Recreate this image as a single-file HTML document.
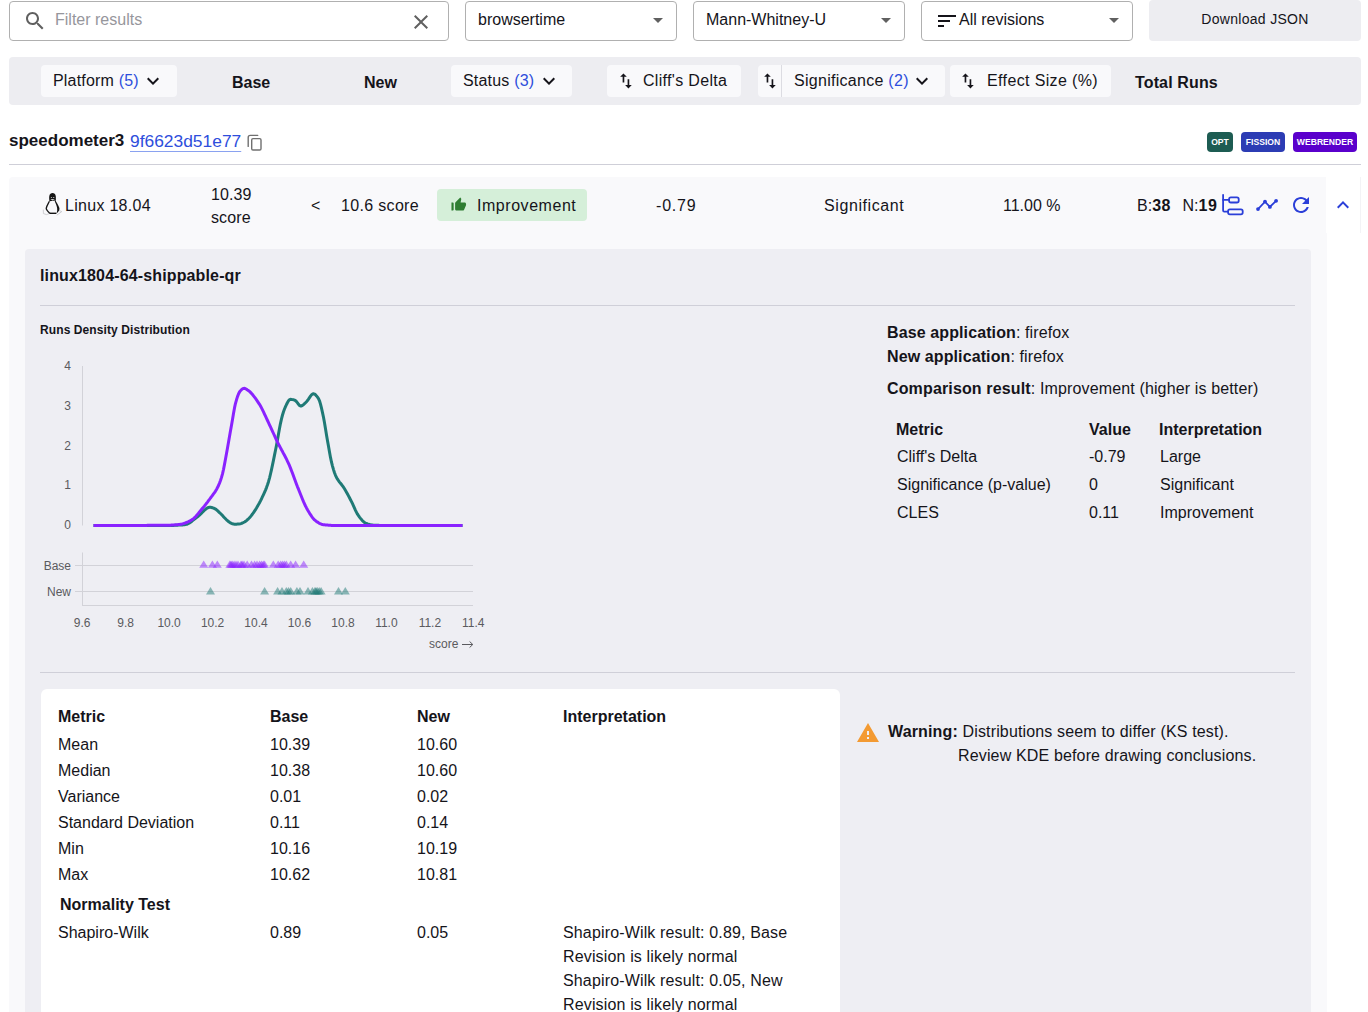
<!DOCTYPE html>
<html><head><meta charset="utf-8">
<style>
*{box-sizing:border-box;margin:0;padding:0}
html,body{width:1368px;height:1012px;overflow:hidden;background:#fff}
body{font-family:"Liberation Sans",sans-serif;color:#15141a;position:relative;font-size:16px}
.a{position:absolute;white-space:nowrap}
.box{position:absolute;border:1px solid #b0b0b0;border-radius:4px;background:#fff}
.btn{position:absolute;background:#f9f9fb;border-radius:4px}
.b{font-weight:bold}
.blue{color:#2e4edc}
.t16{font-size:16px;line-height:20px}
.badge{height:20px;border-radius:4px;color:#fff;font-size:8.6px;font-weight:bold;line-height:21px;text-align:center;letter-spacing:0}
</style></head><body>

<!-- top bar -->
<div class="box" style="left:9px;top:1px;width:440px;height:40px"></div>
<div class="a t16" id="filt" style="left:55px;top:10px;color:#96969c">Filter results</div>
<div class="box" style="left:465px;top:1px;width:212px;height:40px"></div>
<div class="a t16" id="bt" style="left:478px;top:10px">browsertime</div>
<div class="box" style="left:693px;top:1px;width:212px;height:40px"></div>
<div class="a t16" id="mw" style="left:706px;top:10px">Mann-Whitney-U</div>
<div class="box" style="left:921px;top:1px;width:212px;height:40px"></div>
<div class="a t16" id="ar" style="left:959px;top:10px">All revisions</div>
<div class="btn" style="left:1149px;top:0px;width:212px;height:41px;background:#ededf1"></div>
<div class="a" id="dj" style="left:1149px;top:9px;width:212px;text-align:center;font-size:14px;line-height:20px;letter-spacing:0.3px">Download JSON</div>

<!-- toolbar -->
<div class="a" style="left:9px;top:57px;width:1352px;height:48px;background:#ededf1;border-radius:4px"></div>
<div class="btn" style="left:41px;top:65px;width:136px;height:32px"></div>
<div class="a t16" id="plat" style="left:53px;top:71px;letter-spacing:0.18px">Platform <span class="blue">(5)</span></div>
<div class="a t16 b" id="base" style="left:232px;top:73px">Base</div>
<div class="a t16 b" id="new" style="left:364px;top:73px">New</div>
<div class="btn" style="left:451px;top:65px;width:121px;height:32px"></div>
<div class="a t16" id="stat" style="left:463px;top:71px;letter-spacing:0.2px">Status <span class="blue">(3)</span></div>
<div class="btn" style="left:607px;top:65px;width:134px;height:32px"></div>
<div class="a t16" id="cd" style="left:643px;top:71px;letter-spacing:0.32px">Cliff's Delta</div>
<div class="btn" style="left:758px;top:65px;width:187px;height:32px"></div>
<div class="a t16" id="sig" style="left:794px;top:71px;letter-spacing:0.28px">Significance <span class="blue">(2)</span></div>
<div class="btn" style="left:950px;top:65px;width:161px;height:32px"></div>
<div class="a t16" id="es" style="left:987px;top:71px;letter-spacing:0.37px">Effect Size (%)</div>
<div class="a t16 b" id="tr" style="left:1135px;top:73px;letter-spacing:0.14px">Total Runs</div>

<!-- header -->
<div class="a b" id="sp" style="left:9px;top:131px;font-size:17px;line-height:20px">speedometer3</div>
<div class="a blue" id="hash" style="left:130px;top:131px;font-size:17.4px;line-height:20px;text-decoration:underline;text-decoration-color:#8aa2f0;text-underline-offset:4px;text-decoration-thickness:1px">9f6623d51e77</div>
<div class="a" style="left:9px;top:164px;width:1352px;height:1px;background:#cfcfd8"></div>

<!-- row -->
<div class="a" style="left:9px;top:177px;width:1317px;height:840px;background:#f9f9fb;border-radius:4px 0 0 0"></div>
<div class="a" style="left:1326px;top:233px;width:1px;height:800px;background:#f9f9fb"></div>
<div class="a t16" id="lin" style="left:65px;top:196px;letter-spacing:0.29px">Linux 18.04</div>
<div class="a t16" id="v1" style="left:211px;top:182.5px;line-height:23.5px;letter-spacing:0.1px">10.39<br>score</div>
<div class="a t16" id="lt" style="left:311px;top:196px">&lt;</div>
<div class="a t16" id="v2" style="left:341px;top:196px;letter-spacing:0.33px">10.6 score</div>
<div class="a" style="left:437px;top:189px;width:150px;height:32px;background:#d5efd9;border-radius:4px"></div>
<div class="a t16" id="imp" style="left:477px;top:196px;letter-spacing:0.54px">Improvement</div>
<div class="a t16" id="cdv" style="left:656px;top:196px;letter-spacing:0.8px">-0.79</div>
<div class="a t16" id="sgv" style="left:824px;top:196px;letter-spacing:0.59px">Significant</div>
<div class="a t16" id="esv" style="left:1003px;top:196px">11.00 %</div>
<div class="a t16" id="runs" style="left:1137px;top:196px">B:<b style="letter-spacing:0.5px">38</b></div><div class="a t16" id="runs2" style="left:1182.5px;top:196px">N:<b style="letter-spacing:0.5px">19</b></div>

<!-- details panel -->
<div class="a" style="left:25px;top:249px;width:1286px;height:800px;background:#eeeef3;border-radius:4px"></div>
<div class="a b" id="task" style="left:40px;top:266px;font-size:16px;line-height:20px;letter-spacing:0.14px">linux1804-64-shippable-qr</div>
<div class="a" style="left:40px;top:305px;width:1255px;height:1px;background:#cfcfd8"></div>
<div class="a b" id="rdd" style="left:40px;top:323px;font-size:12px;line-height:14px;letter-spacing:0.1px">Runs Density Distribution</div>

<div class="a t16" id="ba" style="left:887px;top:323px;letter-spacing:0.11px"><b>Base application</b>: firefox</div>
<div class="a t16" id="na" style="left:887px;top:347px;letter-spacing:0.11px"><b>New application</b>: firefox</div>
<div class="a t16" id="cr" style="left:887px;top:379px;letter-spacing:0.14px"><b>Comparison result</b>: Improvement (higher is better)</div>

<div class="a" style="left:40px;top:672px;width:1255px;height:1px;background:#cfcfd8"></div>
<div class="a" style="left:41px;top:689px;width:799px;height:400px;background:#fff;border-radius:6px"></div>


<!-- right info table -->
<div class="a t16 b" id="rm" style="left:896px;top:420px">Metric</div>
<div class="a t16 b" id="rv" style="left:1089px;top:420px">Value</div>
<div class="a t16 b" id="ri" style="left:1159px;top:420px">Interpretation</div>
<div class="a t16" style="left:897px;top:447px">Cliff's Delta</div>
<div class="a t16" style="left:1089px;top:447px">-0.79</div>
<div class="a t16" style="left:1160px;top:447px">Large</div>
<div class="a t16" style="left:897px;top:475px">Significance (p-value)</div>
<div class="a t16" style="left:1089px;top:475px">0</div>
<div class="a t16" style="left:1160px;top:475px">Significant</div>
<div class="a t16" id="cles" style="left:897px;top:503px">CLES</div>
<div class="a t16" style="left:1089px;top:503px">0.11</div>
<div class="a t16" style="left:1160px;top:503px">Improvement</div>

<!-- lower table -->
<div class="a t16 b" id="lm" style="left:58px;top:707px">Metric</div>
<div class="a t16 b" style="left:270px;top:707px">Base</div>
<div class="a t16 b" style="left:417px;top:707px">New</div>
<div class="a t16 b" style="left:563px;top:707px">Interpretation</div>
<div class="a t16" id="mean" style="left:58px;top:735px">Mean</div>
<div class="a t16" style="left:270px;top:735px">10.39</div>
<div class="a t16" style="left:417px;top:735px">10.60</div>
<div class="a t16" style="left:58px;top:761px">Median</div>
<div class="a t16" style="left:270px;top:761px">10.38</div>
<div class="a t16" style="left:417px;top:761px">10.60</div>
<div class="a t16" style="left:58px;top:787px">Variance</div>
<div class="a t16" style="left:270px;top:787px">0.01</div>
<div class="a t16" style="left:417px;top:787px">0.02</div>
<div class="a t16" id="std" style="left:58px;top:813px">Standard Deviation</div>
<div class="a t16" style="left:270px;top:813px">0.11</div>
<div class="a t16" style="left:417px;top:813px">0.14</div>
<div class="a t16" style="left:58px;top:839px">Min</div>
<div class="a t16" style="left:270px;top:839px">10.16</div>
<div class="a t16" style="left:417px;top:839px">10.19</div>
<div class="a t16" style="left:58px;top:865px">Max</div>
<div class="a t16" style="left:270px;top:865px">10.62</div>
<div class="a t16" style="left:417px;top:865px">10.81</div>
<div class="a t16 b" id="nt" style="left:60px;top:895px">Normality Test</div>
<div class="a t16" id="sw" style="left:58px;top:923px">Shapiro-Wilk</div>
<div class="a t16" style="left:270px;top:923px">0.89</div>
<div class="a t16" style="left:417px;top:923px">0.05</div>
<div class="a t16" id="swr" style="left:563px;top:921px;line-height:24px;letter-spacing:0.15px">Shapiro-Wilk result: 0.89, Base<br>Revision is likely normal<br>Shapiro-Wilk result: 0.05, New<br>Revision is likely normal</div>

<!-- warning -->
<div class="a t16" id="warn" style="left:888px;top:720px;line-height:24px;letter-spacing:0.15px"><b>Warning:</b> Distributions seem to differ (KS test).<br><span style="padding-left:70px">Review KDE before drawing conclusions.</span></div>

<!-- badges -->
<div class="a badge" style="left:1207px;top:132px;width:26px;background:#1d5c52">OPT</div>
<div class="a badge" style="left:1241px;top:132px;width:44px;background:#2c3cb4">FISSION</div>
<div class="a badge" style="left:1293px;top:132px;width:64px;background:#5a00cc">WEBRENDER</div>

<!-- chevron cell -->
<div class="a" style="left:1360px;top:177px;width:1px;height:56px;background:#f3f3f6"></div>

<svg class="a" style="left:0;top:0" width="1368" height="1012" viewBox="0 0 1368 1012">
<line x1="82.5" y1="366" x2="82.5" y2="525.5" stroke="#d2d2d8" stroke-width="1"/>
<text x="71" y="528.9" text-anchor="end" font-size="12" fill="#5a5a5e">0</text>
<text x="71" y="489.3" text-anchor="end" font-size="12" fill="#5a5a5e">1</text>
<text x="71" y="449.6" text-anchor="end" font-size="12" fill="#5a5a5e">2</text>
<text x="71" y="410.0" text-anchor="end" font-size="12" fill="#5a5a5e">3</text>
<text x="71" y="370.3" text-anchor="end" font-size="12" fill="#5a5a5e">4</text>
<g transform="translate(0,0.8)"><path d="M93.5 524.6 94.5 524.6 95.5 524.6 96.5 524.6 97.5 524.6 98.5 524.6 99.5 524.6 100.5 524.6 101.5 524.6 102.5 524.6 103.5 524.6 104.5 524.6 105.5 524.6 106.5 524.6 107.5 524.6 108.5 524.6 109.5 524.6 110.5 524.6 111.5 524.6 112.5 524.6 113.5 524.6 114.5 524.6 115.5 524.6 116.5 524.6 117.5 524.6 118.5 524.6 119.5 524.6 120.5 524.6 121.5 524.6 122.5 524.6 123.5 524.6 124.5 524.6 125.5 524.6 126.5 524.6 127.5 524.6 128.5 524.6 129.5 524.6 130.5 524.6 131.5 524.6 132.5 524.6 133.5 524.6 134.5 524.6 135.5 524.6 136.5 524.6 137.5 524.6 138.5 524.6 139.5 524.6 140.5 524.6 141.5 524.6 142.5 524.6 143.5 524.6 144.5 524.6 145.5 524.6 146.5 524.6 147.5 524.6 148.5 524.6 149.5 524.6 150.5 524.6 151.5 524.6 152.5 524.6 153.5 524.6 154.5 524.6 155.5 524.6 156.5 524.6 157.5 524.6 158.5 524.6 159.5 524.6 160.5 524.6 161.5 524.6 162.5 524.6 163.5 524.6 164.5 524.6 165.5 524.6 166.5 524.6 167.5 524.6 168.5 524.6 169.5 524.6 170.5 524.6 171.5 524.6 172.5 524.6 173.5 524.6 174.5 524.5 175.5 524.5 176.5 524.4 177.5 524.4 178.5 524.3 179.5 524.3 180.5 524.2 181.5 524.1 182.5 524.1 183.5 524.0 184.5 523.9 185.5 523.8 186.5 523.6 187.5 523.2 188.5 522.7 189.5 522.1 190.5 521.5 191.5 520.7 192.5 519.9 193.5 519.1 194.5 518.3 195.5 517.5 196.5 516.7 197.5 516.0 198.5 515.2 199.5 514.3 200.5 513.4 201.5 512.4 202.5 511.3 203.5 510.3 204.5 509.4 205.5 508.5 206.5 507.7 207.5 507.1 208.5 506.7 209.5 506.5 210.5 506.5 211.5 506.7 212.5 507.0 213.5 507.3 214.5 507.7 215.5 508.3 216.5 509.0 217.5 509.9 218.5 510.8 219.5 511.8 220.5 512.7 221.5 513.7 222.5 514.8 223.5 515.9 224.5 517.0 225.5 518.0 226.5 519.0 227.5 519.9 228.5 520.8 229.5 521.5 230.5 522.1 231.5 522.6 232.5 523.0 233.5 523.3 234.5 523.4 235.5 523.4 236.5 523.4 237.5 523.3 238.5 523.2 239.5 523.1 240.5 522.9 241.5 522.6 242.5 522.2 243.5 521.7 244.5 521.2 245.5 520.6 246.5 519.8 247.5 518.9 248.5 518.0 249.5 517.0 250.5 515.8 251.5 514.5 252.5 513.2 253.5 511.8 254.5 510.3 255.5 508.8 256.5 507.2 257.5 505.5 258.5 503.8 259.5 502.0 260.5 500.1 261.5 498.0 262.5 495.9 263.5 493.8 264.5 491.6 265.5 489.3 266.5 486.8 267.5 484.0 268.5 480.9 269.5 477.3 270.5 473.2 271.5 468.8 272.5 464.1 273.5 459.3 274.5 454.3 275.5 449.5 276.5 444.5 277.5 439.0 278.5 433.3 279.5 427.7 280.5 422.5 281.5 418.0 282.5 414.2 283.5 410.9 284.5 408.2 285.5 405.9 286.5 403.7 287.5 401.7 288.5 400.0 289.5 398.9 290.5 398.5 291.5 398.6 292.5 398.8 293.5 399.0 294.5 399.3 295.5 399.8 296.5 400.8 297.5 402.1 298.5 403.5 299.5 404.6 300.5 405.2 301.5 405.1 302.5 404.6 303.5 403.8 304.5 402.9 305.5 401.9 306.5 400.9 307.5 399.8 308.5 398.4 309.5 396.9 310.5 395.4 311.5 394.1 312.5 393.2 313.5 393.0 314.5 393.3 315.5 394.0 316.5 395.1 317.5 396.4 318.5 397.8 319.5 400.0 320.5 403.3 321.5 407.4 322.5 411.9 323.5 416.5 324.5 421.9 325.5 428.0 326.5 434.1 327.5 439.9 328.5 445.5 329.5 451.2 330.5 456.6 331.5 461.4 332.5 465.3 333.5 468.8 334.5 471.9 335.5 474.5 336.5 476.7 337.5 478.4 338.5 479.9 339.5 481.3 340.5 482.5 341.5 483.7 342.5 485.0 343.5 486.4 344.5 488.0 345.5 489.7 346.5 491.4 347.5 493.2 348.5 495.1 349.5 497.0 350.5 498.9 351.5 500.8 352.5 502.9 353.5 505.1 354.5 507.3 355.5 509.5 356.5 511.5 357.5 513.4 358.5 514.9 359.5 516.3 360.5 517.6 361.5 518.8 362.5 519.9 363.5 520.9 364.5 521.7 365.5 522.3 366.5 522.7 367.5 523.1 368.5 523.4 369.5 523.7 370.5 523.9 371.5 524.2 372.5 524.3 373.5 524.4 374.5 524.5 375.5 524.5 376.5 524.5 377.5 524.5 378.5 524.5 379.5 524.6 380.5 524.6 381.5 524.6 382.5 524.6 383.5 524.6 384.5 524.6 385.5 524.6 386.5 524.6 387.5 524.6 388.5 524.6 389.5 524.6 390.5 524.6 391.5 524.6 392.5 524.6 393.5 524.6 394.5 524.6 395.5 524.6 396.5 524.6 397.5 524.6 398.5 524.6 399.5 524.6 400.5 524.6 401.5 524.6 402.5 524.6 403.5 524.6 404.5 524.6 405.5 524.6 406.5 524.6 407.5 524.6 408.5 524.6 409.5 524.6 410.5 524.6 411.5 524.6 412.5 524.6 413.5 524.6 414.5 524.6 415.5 524.6 416.5 524.6 417.5 524.6 418.5 524.6 419.5 524.6 420.5 524.6 421.5 524.6 422.5 524.6 423.5 524.6 424.5 524.6 425.5 524.6 426.5 524.6 427.5 524.6 428.5 524.6 429.5 524.6 430.5 524.6 431.5 524.6 432.5 524.6 433.5 524.6 434.5 524.6 435.5 524.6 436.5 524.6 437.5 524.6 438.5 524.6 439.5 524.6 440.5 524.6 441.5 524.6 442.5 524.6 443.5 524.6 444.5 524.6 445.5 524.6 446.5 524.6 447.5 524.6 448.5 524.6 449.5 524.6 450.5 524.6 451.5 524.6 452.5 524.6 453.5 524.6 454.5 524.6 455.5 524.6 456.5 524.6 457.5 524.6 458.5 524.6 459.5 524.6 460.5 524.6 461.5 524.6 462.5 524.6" fill="none" stroke="#1f7a76" stroke-width="3" stroke-linejoin="round"/>
<path d="M93.5 524.6 94.5 524.6 95.5 524.6 96.5 524.6 97.5 524.6 98.5 524.6 99.5 524.6 100.5 524.6 101.5 524.6 102.5 524.6 103.5 524.6 104.5 524.6 105.5 524.6 106.5 524.6 107.5 524.6 108.5 524.6 109.5 524.6 110.5 524.6 111.5 524.6 112.5 524.6 113.5 524.6 114.5 524.6 115.5 524.6 116.5 524.6 117.5 524.6 118.5 524.6 119.5 524.6 120.5 524.6 121.5 524.6 122.5 524.6 123.5 524.6 124.5 524.6 125.5 524.6 126.5 524.6 127.5 524.6 128.5 524.6 129.5 524.6 130.5 524.6 131.5 524.6 132.5 524.6 133.5 524.6 134.5 524.6 135.5 524.6 136.5 524.6 137.5 524.6 138.5 524.6 139.5 524.6 140.5 524.6 141.5 524.6 142.5 524.6 143.5 524.6 144.5 524.6 145.5 524.6 146.5 524.6 147.5 524.5 148.5 524.5 149.5 524.5 150.5 524.5 151.5 524.5 152.5 524.5 153.5 524.5 154.5 524.5 155.5 524.5 156.5 524.5 157.5 524.5 158.5 524.5 159.5 524.5 160.5 524.5 161.5 524.5 162.5 524.5 163.5 524.5 164.5 524.5 165.5 524.5 166.5 524.5 167.5 524.5 168.5 524.4 169.5 524.4 170.5 524.4 171.5 524.3 172.5 524.2 173.5 524.2 174.5 524.1 175.5 524.0 176.5 523.9 177.5 523.9 178.5 523.8 179.5 523.7 180.5 523.5 181.5 523.4 182.5 523.1 183.5 522.8 184.5 522.5 185.5 522.1 186.5 521.7 187.5 521.3 188.5 520.9 189.5 520.4 190.5 519.8 191.5 519.2 192.5 518.6 193.5 517.8 194.5 516.9 195.5 515.9 196.5 514.8 197.5 513.6 198.5 512.4 199.5 511.1 200.5 509.9 201.5 508.7 202.5 507.5 203.5 506.3 204.5 505.1 205.5 503.8 206.5 502.5 207.5 501.3 208.5 499.9 209.5 498.6 210.5 497.2 211.5 495.9 212.5 494.5 213.5 493.1 214.5 491.8 215.5 490.3 216.5 488.6 217.5 486.8 218.5 484.7 219.5 482.3 220.5 479.7 221.5 476.6 222.5 473.1 223.5 468.7 224.5 463.6 225.5 458.2 226.5 452.7 227.5 447.2 228.5 441.5 229.5 435.7 230.5 430.0 231.5 424.4 232.5 418.6 233.5 412.6 234.5 407.1 235.5 402.5 236.5 399.0 237.5 395.8 238.5 393.2 239.5 391.2 240.5 389.9 241.5 388.9 242.5 388.0 243.5 387.6 244.5 387.5 245.5 387.9 246.5 388.5 247.5 389.2 248.5 389.8 249.5 390.6 250.5 391.6 251.5 392.6 252.5 393.7 253.5 395.0 254.5 396.3 255.5 397.6 256.5 399.0 257.5 400.5 258.5 402.0 259.5 403.5 260.5 405.2 261.5 407.1 262.5 409.1 263.5 411.1 264.5 413.3 265.5 415.4 266.5 417.6 267.5 419.7 268.5 421.8 269.5 424.0 270.5 426.1 271.5 428.3 272.5 430.5 273.5 432.7 274.5 434.9 275.5 437.1 276.5 439.2 277.5 441.3 278.5 443.3 279.5 445.2 280.5 447.1 281.5 449.0 282.5 450.8 283.5 452.7 284.5 454.5 285.5 456.4 286.5 458.4 287.5 460.5 288.5 462.6 289.5 464.9 290.5 467.3 291.5 469.9 292.5 472.5 293.5 475.3 294.5 478.0 295.5 480.7 296.5 483.4 297.5 486.0 298.5 488.4 299.5 491.0 300.5 493.5 301.5 496.0 302.5 498.5 303.5 500.9 304.5 503.1 305.5 505.2 306.5 507.1 307.5 508.9 308.5 510.6 309.5 512.3 310.5 513.9 311.5 515.4 312.5 516.8 313.5 518.0 314.5 519.1 315.5 519.9 316.5 520.7 317.5 521.3 318.5 522.0 319.5 522.6 320.5 523.0 321.5 523.4 322.5 523.7 323.5 523.9 324.5 524.0 325.5 524.1 326.5 524.2 327.5 524.3 328.5 524.4 329.5 524.5 330.5 524.5 331.5 524.6 332.5 524.6 333.5 524.6 334.5 524.6 335.5 524.6 336.5 524.6 337.5 524.6 338.5 524.6 339.5 524.6 340.5 524.6 341.5 524.6 342.5 524.6 343.5 524.6 344.5 524.6 345.5 524.6 346.5 524.6 347.5 524.6 348.5 524.6 349.5 524.6 350.5 524.6 351.5 524.6 352.5 524.6 353.5 524.6 354.5 524.6 355.5 524.6 356.5 524.6 357.5 524.6 358.5 524.6 359.5 524.6 360.5 524.6 361.5 524.6 362.5 524.6 363.5 524.6 364.5 524.6 365.5 524.6 366.5 524.6 367.5 524.6 368.5 524.6 369.5 524.6 370.5 524.6 371.5 524.6 372.5 524.6 373.5 524.6 374.5 524.6 375.5 524.6 376.5 524.6 377.5 524.6 378.5 524.6 379.5 524.6 380.5 524.6 381.5 524.6 382.5 524.6 383.5 524.6 384.5 524.6 385.5 524.6 386.5 524.6 387.5 524.6 388.5 524.6 389.5 524.6 390.5 524.6 391.5 524.6 392.5 524.6 393.5 524.6 394.5 524.6 395.5 524.6 396.5 524.6 397.5 524.6 398.5 524.6 399.5 524.6 400.5 524.6 401.5 524.6 402.5 524.6 403.5 524.6 404.5 524.6 405.5 524.6 406.5 524.6 407.5 524.6 408.5 524.6 409.5 524.6 410.5 524.6 411.5 524.6 412.5 524.6 413.5 524.6 414.5 524.6 415.5 524.6 416.5 524.6 417.5 524.6 418.5 524.6 419.5 524.6 420.5 524.6 421.5 524.6 422.5 524.6 423.5 524.6 424.5 524.6 425.5 524.6 426.5 524.6 427.5 524.6 428.5 524.6 429.5 524.6 430.5 524.6 431.5 524.6 432.5 524.6 433.5 524.6 434.5 524.6 435.5 524.6 436.5 524.6 437.5 524.6 438.5 524.6 439.5 524.6 440.5 524.6 441.5 524.6 442.5 524.6 443.5 524.6 444.5 524.6 445.5 524.6 446.5 524.6 447.5 524.6 448.5 524.6 449.5 524.6 450.5 524.6 451.5 524.6 452.5 524.6 453.5 524.6 454.5 524.6 455.5 524.6 456.5 524.6 457.5 524.6 458.5 524.6 459.5 524.6 460.5 524.6 461.5 524.6 462.5 524.6" fill="none" stroke="#8a22ff" stroke-width="3" stroke-linejoin="round"/></g>
<line x1="82.5" y1="552.5" x2="82.5" y2="605.5" stroke="#d2d2d8" stroke-width="1"/>
<line x1="82" y1="605.5" x2="473" y2="605.5" stroke="#d2d2d8" stroke-width="1"/>
<line x1="75" y1="565.5" x2="473" y2="565.5" stroke="#d2d2d8" stroke-width="1"/>
<line x1="75" y1="591.5" x2="473" y2="591.5" stroke="#d2d2d8" stroke-width="1"/>
<text x="71" y="569.5" text-anchor="end" font-size="12" fill="#5a5a5e">Base</text>
<text x="71" y="595.5" text-anchor="end" font-size="12" fill="#5a5a5e">New</text>
<path d="M203.7 560.5 L199.2 567.8 L208.2 567.8Z" fill="#8a22ff" fill-opacity="0.5"/>
<path d="M212.4 560.5 L207.9 567.8 L216.9 567.8Z" fill="#8a22ff" fill-opacity="0.5"/>
<path d="M217.3 560.5 L212.8 567.8 L221.8 567.8Z" fill="#8a22ff" fill-opacity="0.5"/>
<path d="M229.8 560.5 L225.3 567.8 L234.3 567.8Z" fill="#8a22ff" fill-opacity="0.5"/>
<path d="M231.0 560.5 L226.5 567.8 L235.5 567.8Z" fill="#8a22ff" fill-opacity="0.5"/>
<path d="M232.3 560.5 L227.8 567.8 L236.8 567.8Z" fill="#8a22ff" fill-opacity="0.5"/>
<path d="M234.1 560.5 L229.6 567.8 L238.6 567.8Z" fill="#8a22ff" fill-opacity="0.5"/>
<path d="M236.0 560.5 L231.5 567.8 L240.5 567.8Z" fill="#8a22ff" fill-opacity="0.5"/>
<path d="M238.0 560.5 L233.5 567.8 L242.5 567.8Z" fill="#8a22ff" fill-opacity="0.5"/>
<path d="M241.0 560.5 L236.5 567.8 L245.5 567.8Z" fill="#8a22ff" fill-opacity="0.5"/>
<path d="M242.2 560.5 L237.7 567.8 L246.7 567.8Z" fill="#8a22ff" fill-opacity="0.5"/>
<path d="M244.0 560.5 L239.5 567.8 L248.5 567.8Z" fill="#8a22ff" fill-opacity="0.5"/>
<path d="M247.2 560.5 L242.7 567.8 L251.7 567.8Z" fill="#8a22ff" fill-opacity="0.5"/>
<path d="M251.5 560.5 L247.0 567.8 L256.0 567.8Z" fill="#8a22ff" fill-opacity="0.5"/>
<path d="M254.6 560.5 L250.1 567.8 L259.1 567.8Z" fill="#8a22ff" fill-opacity="0.5"/>
<path d="M257.0 560.5 L252.5 567.8 L261.5 567.8Z" fill="#8a22ff" fill-opacity="0.5"/>
<path d="M259.6 560.5 L255.1 567.8 L264.1 567.8Z" fill="#8a22ff" fill-opacity="0.5"/>
<path d="M261.5 560.5 L257.0 567.8 L266.0 567.8Z" fill="#8a22ff" fill-opacity="0.5"/>
<path d="M263.3 560.5 L258.8 567.8 L267.8 567.8Z" fill="#8a22ff" fill-opacity="0.5"/>
<path d="M264.6 560.5 L260.1 567.8 L269.1 567.8Z" fill="#8a22ff" fill-opacity="0.5"/>
<path d="M273.3 560.5 L268.8 567.8 L277.8 567.8Z" fill="#8a22ff" fill-opacity="0.5"/>
<path d="M278.2 560.5 L273.7 567.8 L282.7 567.8Z" fill="#8a22ff" fill-opacity="0.5"/>
<path d="M280.7 560.5 L276.2 567.8 L285.2 567.8Z" fill="#8a22ff" fill-opacity="0.5"/>
<path d="M282.6 560.5 L278.1 567.8 L287.1 567.8Z" fill="#8a22ff" fill-opacity="0.5"/>
<path d="M284.4 560.5 L279.9 567.8 L288.9 567.8Z" fill="#8a22ff" fill-opacity="0.5"/>
<path d="M286.3 560.5 L281.8 567.8 L290.8 567.8Z" fill="#8a22ff" fill-opacity="0.5"/>
<path d="M290.7 560.5 L286.2 567.8 L295.2 567.8Z" fill="#8a22ff" fill-opacity="0.5"/>
<path d="M295.6 560.5 L291.1 567.8 L300.1 567.8Z" fill="#8a22ff" fill-opacity="0.5"/>
<path d="M303.7 560.5 L299.2 567.8 L308.2 567.8Z" fill="#8a22ff" fill-opacity="0.5"/>
<path d="M210.5 587 L206.0 594.5 L215.0 594.5Z" fill="#1f7a76" fill-opacity="0.5"/>
<path d="M264.6 587 L260.1 594.5 L269.1 594.5Z" fill="#1f7a76" fill-opacity="0.5"/>
<path d="M277.6 587 L273.1 594.5 L282.1 594.5Z" fill="#1f7a76" fill-opacity="0.5"/>
<path d="M282.0 587 L277.5 594.5 L286.5 594.5Z" fill="#1f7a76" fill-opacity="0.5"/>
<path d="M286.3 587 L281.8 594.5 L290.8 594.5Z" fill="#1f7a76" fill-opacity="0.5"/>
<path d="M288.5 587 L284.0 594.5 L293.0 594.5Z" fill="#1f7a76" fill-opacity="0.5"/>
<path d="M290.7 587 L286.2 594.5 L295.2 594.5Z" fill="#1f7a76" fill-opacity="0.5"/>
<path d="M296.9 587 L292.4 594.5 L301.4 594.5Z" fill="#1f7a76" fill-opacity="0.5"/>
<path d="M300.0 587 L295.5 594.5 L304.5 594.5Z" fill="#1f7a76" fill-opacity="0.5"/>
<path d="M308.0 587 L303.5 594.5 L312.5 594.5Z" fill="#1f7a76" fill-opacity="0.5"/>
<path d="M312.4 587 L307.9 594.5 L316.9 594.5Z" fill="#1f7a76" fill-opacity="0.5"/>
<path d="M314.9 587 L310.4 594.5 L319.4 594.5Z" fill="#1f7a76" fill-opacity="0.5"/>
<path d="M316.0 587 L311.5 594.5 L320.5 594.5Z" fill="#1f7a76" fill-opacity="0.5"/>
<path d="M317.4 587 L312.9 594.5 L321.9 594.5Z" fill="#1f7a76" fill-opacity="0.5"/>
<path d="M319.2 587 L314.7 594.5 L323.7 594.5Z" fill="#1f7a76" fill-opacity="0.5"/>
<path d="M321.1 587 L316.6 594.5 L325.6 594.5Z" fill="#1f7a76" fill-opacity="0.5"/>
<path d="M338.5 587 L334.0 594.5 L343.0 594.5Z" fill="#1f7a76" fill-opacity="0.5"/>
<path d="M345.3 587 L340.8 594.5 L349.8 594.5Z" fill="#1f7a76" fill-opacity="0.5"/>
<text x="82.2" y="626.8" text-anchor="middle" font-size="12" fill="#5a5a5e">9.6</text>
<text x="125.7" y="626.8" text-anchor="middle" font-size="12" fill="#5a5a5e">9.8</text>
<text x="169.1" y="626.8" text-anchor="middle" font-size="12" fill="#5a5a5e">10.0</text>
<text x="212.6" y="626.8" text-anchor="middle" font-size="12" fill="#5a5a5e">10.2</text>
<text x="256.0" y="626.8" text-anchor="middle" font-size="12" fill="#5a5a5e">10.4</text>
<text x="299.5" y="626.8" text-anchor="middle" font-size="12" fill="#5a5a5e">10.6</text>
<text x="343.0" y="626.8" text-anchor="middle" font-size="12" fill="#5a5a5e">10.8</text>
<text x="386.4" y="626.8" text-anchor="middle" font-size="12" fill="#5a5a5e">11.0</text>
<text x="429.9" y="626.8" text-anchor="middle" font-size="12" fill="#5a5a5e">11.2</text>
<text x="473.3" y="626.8" text-anchor="middle" font-size="12" fill="#5a5a5e">11.4</text>
<text x="429" y="648" font-size="12" fill="#5a5a5e">score</text>
<path d="M462 644.5 H472.6 M469.6 641.5 L472.8 644.5 L469.6 647.5" fill="none" stroke="#5a5a5e" stroke-width="1"/>
</svg>
<svg class="a" style="left:23.00px;top:9.00px" width="24.00" height="24.00" viewBox="0 0 24 24"><path d="M15.5 14h-.79l-.28-.27C15.41 12.59 16 11.11 16 9.5 16 5.91 13.09 3 9.5 3S3 5.91 3 9.5 5.91 16 9.5 16c1.61 0 3.09-.59 4.23-1.57l.27.28v.79l5 4.99L20.49 19l-4.99-5zm-6 0C7.01 14 5 11.99 5 9.5S7.01 5 9.5 5 14 7.01 14 9.5 11.99 14 9.5 14z" fill="#606060"/></svg>
<svg class="a" style="left:409.00px;top:9.50px" width="24.00" height="24.00" viewBox="0 0 24 24"><path d="M19 6.41L17.59 5 12 10.59 6.41 5 5 6.41 10.59 12 5 17.59 6.41 19 12 13.41 17.59 19 19 17.59 13.41 12z" fill="#606060"/></svg>
<svg class="a" style="left:646.00px;top:8.40px" width="24.00" height="24.00" viewBox="0 0 24 24"><path d="M7 10l5 5 5-5z" fill="#606060"/></svg>
<svg class="a" style="left:873.50px;top:8.40px" width="24.00" height="24.00" viewBox="0 0 24 24"><path d="M7 10l5 5 5-5z" fill="#606060"/></svg>
<svg class="a" style="left:1101.70px;top:8.40px" width="24.00" height="24.00" viewBox="0 0 24 24"><path d="M7 10l5 5 5-5z" fill="#606060"/></svg>
<svg class="a" style="left:934.60px;top:9.40px" width="24.00" height="24.00" viewBox="0 0 24 24"><path d="M3 18h6v-2H3v2zM3 6v2h18V6H3zm0 7h12v-2H3v2z" fill="#15141a"/></svg>
<svg class="a" style="left:141.10px;top:69.00px" width="24.00" height="24.00" viewBox="0 0 24 24"><path d="M16.59 8.59L12 13.17 7.41 8.59 6 10l6 6 6-6z" fill="#15141a"/></svg>
<svg class="a" style="left:536.50px;top:69.00px" width="24.00" height="24.00" viewBox="0 0 24 24"><path d="M16.59 8.59L12 13.17 7.41 8.59 6 10l6 6 6-6z" fill="#15141a"/></svg>
<svg class="a" style="left:909.80px;top:69.00px" width="24.00" height="24.00" viewBox="0 0 24 24"><path d="M16.59 8.59L12 13.17 7.41 8.59 6 10l6 6 6-6z" fill="#15141a"/></svg>
<svg class="a" style="left:615.55px;top:70.90px" width="19.92" height="19.92" viewBox="0 0 24 24"><path d="M16 17.01V10h-2v7.01h-3L15 21l4-3.99h-3zM9 3L5 6.99h3V14h2V6.99h3L9 3z" fill="#15141a"/></svg>
<svg class="a" style="left:759.55px;top:70.90px" width="19.92" height="19.92" viewBox="0 0 24 24"><path d="M16 17.01V10h-2v7.01h-3L15 21l4-3.99h-3zM9 3L5 6.99h3V14h2V6.99h3L9 3z" fill="#15141a"/></svg>
<svg class="a" style="left:957.75px;top:70.90px" width="19.92" height="19.92" viewBox="0 0 24 24"><path d="M16 17.01V10h-2v7.01h-3L15 21l4-3.99h-3zM9 3L5 6.99h3V14h2V6.99h3L9 3z" fill="#15141a"/></svg>
<div class="a" style="left:781px;top:65px;width:1px;height:32px;background:#dcdce2"></div>
<svg class="a" style="left:450.00px;top:196.30px" width="17.52" height="17.52" viewBox="0 0 24 24"><path d="M2 20h2c.55 0 1-.45 1-1v-9c0-.55-.45-1-1-1H2v11zm19.83-7.12c.11-.25.17-.52.17-.8V11c0-1.1-.9-2-2-2h-5.5l.92-4.65c.05-.22.02-.46-.08-.66-.23-.45-.52-.86-.88-1.22L14 2 7.59 8.41C7.21 8.79 7 9.3 7 9.83v7.84C7 18.95 8.05 20 9.34 20h8.11c.7 0 1.36-.37 1.72-.97l2.66-6.15z" fill="#2e7d32"/></svg>
<svg class="a" style="left:1289.00px;top:193.00px" width="24.00" height="24.00" viewBox="0 0 24 24"><path d="M17.65 6.35C16.2 4.9 14.21 4 12 4c-4.42 0-7.99 3.58-7.99 8s3.57 8 7.99 8c3.73 0 6.84-2.55 7.73-6h-2.08c-.82 2.33-3.04 4-5.65 4-3.31 0-6-2.69-6-6s2.69-6 6-6c1.66 0 3.14.69 4.22 1.78L13 11h7V4l-2.35 2.35z" fill="#2b3fd8"/></svg>
<svg class="a" style="left:1331.20px;top:192.80px" width="24.00" height="24.00" viewBox="0 0 24 24"><path d="M12 8l-6 6 1.41 1.41L12 10.83l4.59 4.58L18 14z" fill="#2b3fd8"/></svg>
<svg class="a" style="left:855.80px;top:721.10px" width="24.00" height="24.00" viewBox="0 0 24 24"><path d="M1 21h22L12 2 1 21zm12-3h-2v-2h2v2zm0-4h-2v-4h2v4z" fill="#f39a32"/></svg>
<svg class="a" style="left:240px;top:128px" width="28" height="28" viewBox="240 128 28 28"><path d="M248.2 146.4 V137.5 Q248.2 135.4 250.3 135.4 H257.7" fill="none" stroke="#707070" stroke-width="1.4" stroke-linecap="round"/><rect x="251.7" y="138.6" width="9.3" height="11.4" rx="1.3" fill="none" stroke="#707070" stroke-width="1.4"/></svg>
<svg class="a" style="left:1216px;top:188px" width="34" height="34" viewBox="1216 188 34 34"><g fill="none" stroke="#2b3fd8" stroke-width="1.8" stroke-linecap="round"><path d="M1223.1 194.8 V210.6 Q1223.1 211.7 1224.2 211.7 H1228"/><path d="M1223.1 199.9 H1229"/><rect x="1229.1" y="197.3" width="9.6" height="5.2" rx="1.8"/><rect x="1228.1" y="209.3" width="14.6" height="5.1" rx="1.8"/></g></svg>
<svg class="a" style="left:1250px;top:190px" width="34" height="30" viewBox="1250 190 34 30"><g fill="#2b3fd8"><circle cx="1258" cy="209.1" r="1.9"/><circle cx="1265" cy="201.7" r="1.9"/><circle cx="1269.9" cy="206.9" r="1.9"/><circle cx="1276.1" cy="200.8" r="1.9"/></g><path d="M1258 209.1 L1265 201.7 L1269.9 206.9 L1276.1 200.8" fill="none" stroke="#2b3fd8" stroke-width="1.8"/></svg>
<svg class="a" style="left:40px;top:190px" width="26" height="28" viewBox="40 190 26 28">
<path d="M43.3 209.6 L43.4 213.6 L46.6 214.6 L49.6 213.4" fill="none" stroke="#c4c4c8" stroke-width="0.8"/>
<path d="M58.2 210.2 L61.8 211.6 L56.8 215.2" fill="none" stroke="#c4c4c8" stroke-width="0.8"/>
<path d="M49.4 201.2 C49.2 199 49 197.5 49.3 196 C49.8 193.8 51 193 52.5 193 C54.2 193 55.5 194 55.8 196.2 C56 198 55.7 199.3 56 200.5 Z" fill="#151515"/>
<path d="M50.6 197.6 Q51.5 196.8 52.3 197.6 Q51.5 198.6 50.6 197.6Z M52.8 197.6 Q53.7 196.8 54.6 197.6 Q53.7 198.6 52.8 197.6Z" fill="#e8e8e8"/>
<path d="M50.3 199.6 Q52.5 198.6 54.8 199.6 Q52.5 201.2 50.3 199.6Z" fill="#d8d8d8"/>
<path d="M49.4 201.3 C48.3 203.5 46.6 206 46.2 208.3 C46.3 210 48.2 211.8 50 213.4" fill="none" stroke="#151515" stroke-width="1.3"/>
<path d="M55.2 200 C56.3 202.4 58.6 205.2 59.4 208 C59.8 209.8 58.8 211.6 56.6 213.4 L57.2 210.5 C57.5 207.5 56.2 204.5 54.8 201.5 Z" fill="#151515"/>
<path d="M50 213.3 H56.4" stroke="#151515" stroke-width="1.4"/>
</svg>
</body></html>
